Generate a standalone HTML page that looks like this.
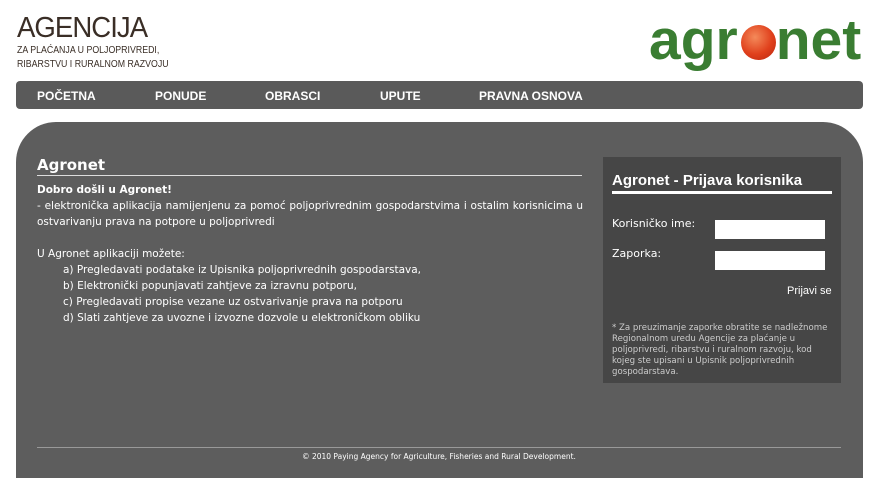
<!DOCTYPE html>
<html><head><meta charset="utf-8"><style>
body{margin:0;width:880px;height:495px;background:#fff;position:relative;overflow:hidden;font-family:"DejaVu Sans",Verdana,sans-serif}
.a{position:absolute}
</style></head><body>
<div class="a" style="left:17px;top:12px;font:29px 'Liberation Sans',sans-serif;color:#3a2e26;letter-spacing:-1px;line-height:32px;transform:scaleX(0.95);transform-origin:left">AGENCIJA</div>
<div class="a" style="left:17px;top:44px;font:10px 'Liberation Sans',sans-serif;color:#3a2e26;line-height:14px;transform:scaleX(0.88);transform-origin:left">ZA PLAĆANJA U POLJOPRIVREDI,<br>RIBARSTVU I RURALNOM RAZVOJU</div>
<div class="a" style="left:649px;top:5px;font:bold 57px 'Liberation Sans',sans-serif;color:#3a7d32;line-height:70px;white-space:nowrap">agr<span style="display:inline-block;width:38px"></span>net</div>
<div class="a" style="left:741px;top:25px;width:35px;height:35px;border-radius:50%;background:radial-gradient(circle at 40% 35%,#f48a5a,#e0401c 55%,#b8260f)"></div>
<div class="a" style="left:16px;top:81px;width:847px;height:28px;background:#5a5a5a;border-radius:4px"></div>
<div class="a" style="top:89px;font:bold 12px 'Liberation Sans',sans-serif;color:#fff;left:37px">POČETNA</div>
<div class="a" style="top:89px;font:bold 12px 'Liberation Sans',sans-serif;color:#fff;left:155px">PONUDE</div>
<div class="a" style="top:89px;font:bold 12px 'Liberation Sans',sans-serif;color:#fff;left:265px">OBRASCI</div>
<div class="a" style="top:89px;font:bold 12px 'Liberation Sans',sans-serif;color:#fff;left:380px">UPUTE</div>
<div class="a" style="top:89px;font:bold 12px 'Liberation Sans',sans-serif;color:#fff;left:479px">PRAVNA OSNOVA</div>
<div class="a" style="left:16px;top:122px;width:847px;height:356px;background:#5d5d5d;border-radius:40px 40px 0 0"></div>
<div class="a" style="left:37px;top:156px;width:545px;font:bold 15px 'DejaVu Sans',sans-serif;color:#fff;border-bottom:1px solid #ddd;padding-bottom:1px">Agronet</div>
<div class="a" style="left:37px;top:182px;width:546px;font:10.5px/16px 'DejaVu Sans',sans-serif;color:#fff;text-align:justify">
<b>Dobro došli u Agronet!</b><br>- elektronička aplikacija namijenjenu za pomoć poljoprivrednim gospodarstvima i ostalim korisnicima u ostvarivanju prava na potpore u poljoprivredi<br><br>U Agronet aplikaciji možete:<br>
<div style="padding-left:26px;text-align:left">a) Pregledavati podatake iz Upisnika poljoprivrednih gospodarstava,<br>b) Elektronički popunjavati zahtjeve za izravnu potporu,<br>c) Pregledavati propise vezane uz ostvarivanje prava na potporu<br>d) Slati zahtjeve za uvozne i izvozne dozvole u elektroničkom obliku</div></div>
<div class="a" style="left:603px;top:157px;width:238px;height:226px;background:#464646"></div>
<div class="a" style="left:612px;top:172px;width:220px;font:bold 15px 'Liberation Sans',sans-serif;color:#fff;border-bottom:3px solid #fff;padding-bottom:2px">Agronet - Prijava korisnika</div>
<div class="a" style="left:612px;top:217px;font:11px 'DejaVu Sans',sans-serif;color:#fff">Korisničko ime:</div>
<div class="a" style="left:612px;top:247px;font:11px 'DejaVu Sans',sans-serif;color:#fff">Zaporka:</div>
<div class="a" style="left:715px;top:220px;width:110px;height:19px;background:#fff"></div>
<div class="a" style="left:715px;top:251px;width:110px;height:19px;background:#fff"></div>
<div class="a" style="left:787px;top:285px;font:11px 'Liberation Sans',sans-serif;color:#fff">Prijavi se</div>
<div class="a" style="left:612px;top:323px;width:225px;font:8.6px/11px 'DejaVu Sans',sans-serif;color:#ccc">* Za preuzimanje zaporke obratite se nadležnome Regionalnom uredu Agencije za plaćanje u poljoprivredi, ribarstvu i ruralnom razvoju, kod kojeg ste upisani u Upisnik poljoprivrednih gospodarstava.</div>
<div class="a" style="left:37px;top:447px;width:804px;border-top:1px solid #999"></div>
<div class="a" style="left:37px;top:452px;width:804px;text-align:center;font:7.5px 'DejaVu Sans',sans-serif;color:#fff">© 2010 Paying Agency for Agriculture, Fisheries and Rural Development.</div>
</body></html>
